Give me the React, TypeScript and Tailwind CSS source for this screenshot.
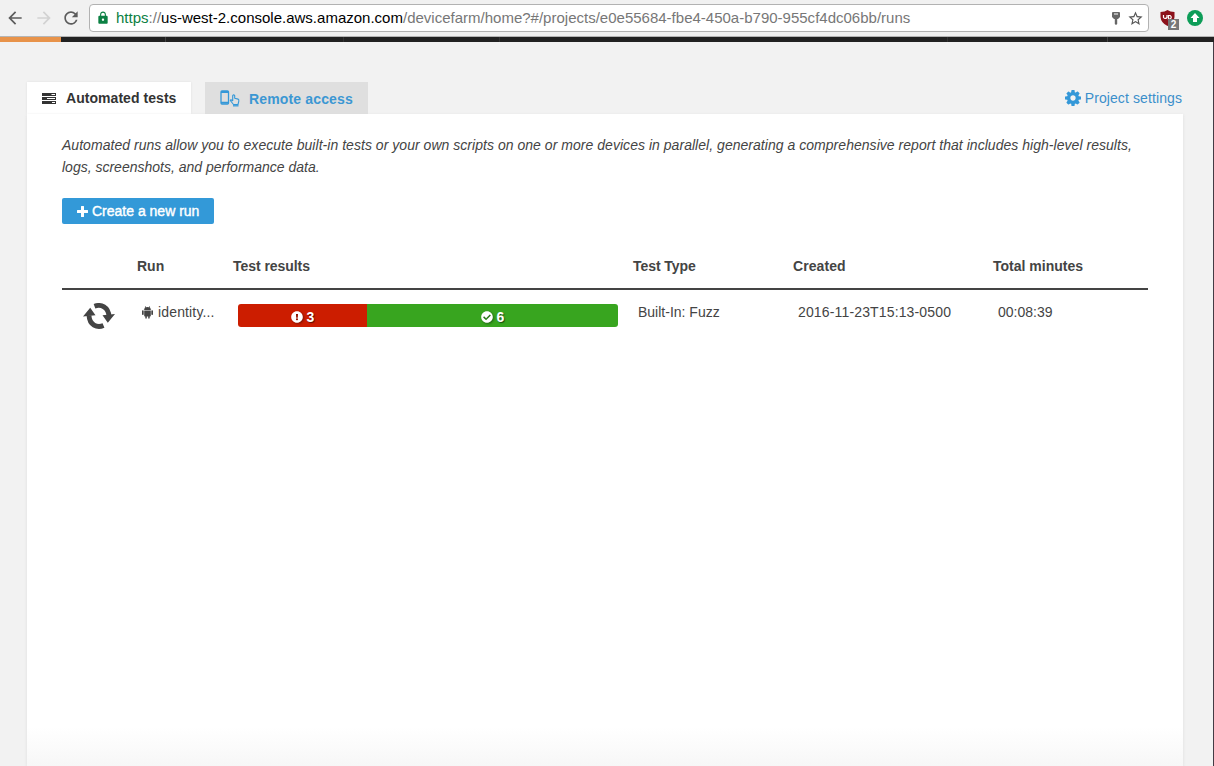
import React from "react";
import { FaExclamationCircle, FaCheckCircle } from "react-icons/fa";
import { MdArrowBack, MdArrowForward, MdRefresh, MdLock, MdStarBorder } from "react-icons/md";

function Cog() {
  return (
    <svg viewBox="0 0 1536 1536" className="size-[16px] shrink-0" fill="#3498d8">
      <path d="M1024 768q0-106-75-181t-181-75-181 75-75 181 75 181 181 75 181-75 75-181zm512-109v222q0 12-8 23t-20 13l-185 28q-19 54-39 91 35 50 107 138 10 12 10 25t-9 23q-27 37-99 108t-94 71q-12 0-26-9l-138-108q-44 23-91 38-16 136-29 186-7 28-36 28h-222q-14 0-24.500-8.500t-11.500-21.500l-28-184q-49-16-90-37l-141 107q-10 9-25 9-14 0-25-11-126-114-165-168-7-10-7-23 0-12 8-23 15-21 51-66.500t54-70.500q-27-50-41-99l-183-27q-13-2-21-12.500t-8-23.500v-222q0-12 8-23t19-13l186-28q14-46 39-92-40-57-107-138-10-12-10-24 0-10 9-23 26-36 98.500-107.500t94.500-71.500q13 0 26 10l138 107q44-23 91-38 16-136 29-186 7-28 36-28h222q14 0 24.500 8.500t11.500 21.500l28 184q49 16 90 37l142-107q9-9 24-9 13 0 25 10 129 119 165 170 7 8 7 22 0 12-8 23-15 21-51 66.500t-54 70.500q26 50 41 98l183 28q13 2 21 12.500t8 23.500z" />
    </svg>
  );
}

function Tasks() {
  return (
    <svg viewBox="0 0 14 11" className="h-[11px] w-[14px] shrink-0" fill="#333">
      <path fillRule="evenodd" d="M0 0h14v3H0zM9.500 1v1h3.500v-1zM0 4h14v3H0zM5 5v1h8v-1zM0 8h14v3H0zM10 9v1h3v-1z" />
    </svg>
  );
}

function Remote() {
  return (
    <svg viewBox="0 0 20 17" className="h-[17px] w-[20px] shrink-0" fill="none" stroke="#3498d8">
      <rect x="1" y="1" width="7.500" height="13" rx="1" strokeWidth="1.300" />
      <path d="M1 2h7.500M1 12.700h7.500" strokeWidth="1.800" />
      <path d="M12.700 11V5.500q1-1.300 2 0V8.300l3.400.8q1 .4.700 2l-.8 3.400h-4.500l-3.200-4q.4-1.500 2.400.5" strokeWidth="1.100" strokeLinejoin="round" />
      <path d="M13 15.800h5.500" strokeWidth="1.300" />
    </svg>
  );
}

function Plus() {
  return (
    <svg viewBox="0 0 11 11" className="size-[11px] shrink-0" fill="#fff">
      <path d="M4 .5Q4 0 4.500 0h2Q7 0 7 .5V4h3.500q.5 0 .5.500v2q0 .5-.5.500H7v3.500q0 .5-.5.500h-2Q4 11 4 10.500V7H.5Q0 7 0 6.500v-2Q0 4 .5 4H4z" />
    </svg>
  );
}

function Android() {
  return (
    <svg viewBox="0 0 11 13" className="h-[13px] w-[11px] shrink-0" fill="#444">
      <path d="M2.200 4Q2.400 2 4 1.300L3.300.2M8.800 4Q8.600 2 7 1.300L7.700.2" stroke="#444" strokeWidth=".4" />
      <path d="M2.200 4Q2.600 1 5.500 1T8.800 4zM2.200 4.400h6.600v5.400q0 .7-.7.700H7.700v1.800q-.8.900-1.500 0v-1.800H4.800v1.800q-.8.900-1.500 0v-1.800H2.900q-.7 0-.7-.7z" />
      <rect x="0" y="4.300" width="1.700" height="4.800" rx=".8" />
      <rect x="9.300" y="4.300" width="1.700" height="4.800" rx=".8" />
    </svg>
  );
}

function Cycle() {
  return (
    <svg viewBox="0 0 32 26" className="h-[26px] w-[32px] shrink-0" fill="none" stroke="#444">
      <path d="M11.500 3.200C18 .8 25.500 4 26 13.500M20.500 22.500C14 25.200 6.500 22 6 12.500" strokeWidth="4.800" />
      <path d="M19.500 13l12.500-1.300L24.800 20.500zM12.500 13L0 14.300 7.200 5.500z" transform="translate(0 -.8)" fill="#444" stroke="none" />
    </svg>
  );
}

function Shield() {
  return (
    <svg viewBox="0 0 20 20" className="h-[20px] w-[20px] shrink-0">
      <path d="M7.500 0Q10 2 14.500 2V7Q14 13 7.500 16Q1 13 .5 7V2Q5 2 7.500 0z" fill="#8c121b" />
      <path d="M3.500 5v2.500q1.500 2 3.500 0V5M8.500 10V5.500h1.500q2.500 1.500 0 3.500H8.500" fill="none" stroke="#fff" strokeWidth="1.200" />
    </svg>
  );
}

function Key() {
  return (
    <svg viewBox="0 0 10 13" className="h-[13px] w-[10px]">
      <path fillRule="evenodd" d="M1 1q0-1 1-1h6q1 0 1 1v4L7 7H6.200v5l-1.200 1-1.200-1V7H3L1 5zM3 1.500v1h4v-1z" fill="#666" />
    </svg>
  );
}

function BrowserBar() {
  return (
    <div className="flex h-[37px] shrink-0 items-start border-b border-[#b5b5b5] bg-[#f1f1f1]">
      <div className="mt-[8px] flex w-[89px] shrink-0 items-center pl-[5px]">
        <MdArrowBack className="size-[20px] text-[#5c5c5c]" />
        <MdArrowForward className="ml-[9px] size-[20px] text-[#d2d2d2]" />
        <MdRefresh className="ml-[7px] size-[20px] text-[#5c5c5c]" />
      </div>
      <div className="mt-[4px] flex h-[28px] w-[1060px] items-center rounded-[4px] border border-[#b2b2b2] bg-white pl-[6px] pr-[4px]">
        <MdLock className="size-[14px] text-[#0b8043]" />
        <div className="ml-[6px] text-[15px] leading-[20px] tracking-[0.004px] whitespace-nowrap text-[#777]">
          <span className="text-[#0b8043]">https</span>://<span className="text-black">us-west-2.console.aws.amazon.com</span>/devicefarm/home?#/projects/e0e55684-fbe4-450a-b790-955cf4dc06bb/runs
        </div>
        <div className="ml-auto flex items-center gap-[6px]">
          <Key />
          <MdStarBorder className="size-[17px] text-[#555]" />
        </div>
      </div>
      <div className="relative mt-[10px] ml-[11px] flex">
        <Shield />
        <div className="absolute top-[9px] left-[8px] h-[11px] w-[11px] bg-[#777] text-center text-[10px] leading-[11px] font-bold text-white">2</div>
      </div>
      <svg viewBox="0 0 16 16" className="mt-[10px] ml-[7px] size-[16px]">
        <circle cx="8" cy="8" r="8" fill="#0d9d58" />
        <path d="M8 3l4.500 5H10v4H6V8H3.500z" fill="#fff" />
      </svg>
    </div>
  );
}

export default function App() {
  return (
    <div className="flex h-[766px] w-[1214px] flex-col overflow-hidden bg-[#f2f2f2] font-['Liberation_Sans',Arial,sans-serif] text-[14px] leading-[20px] text-[#444]">
      <BrowserBar />
      <div className="flex h-[5px] shrink-0 bg-[#222]">
        <div className="w-[61px] bg-[#e8934a]" />
        <div className="w-[105px] border-r border-[#444]" />
        <div className="w-[178px] border-r border-[#333]" />
        <div className="w-[156px] border-r border-[#333]" />
        <div className="w-[448px] border-r border-[#333]" />
        <div className="w-[160px] border-r border-[#444]" />
      </div>
      <div className="flex grow border-r border-[#433b44] pr-[30px] pl-[27px]">
        <div className="flex w-[1156px] flex-col pt-[40px]">
          <div className="flex h-[32px] shrink-0">
            <div className="flex w-[164px] items-center bg-white pl-[15px] font-bold text-[#333] shadow-[0_0_2px_#ddd]">
              <Tasks />
              <span className="ml-[10px] tracking-[0.050px] whitespace-nowrap">Automated tests</span>
            </div>
            <div className="ml-[14px] flex w-[163px] items-center bg-[#dfdfdf] pl-[15px] font-bold text-[#3b97d3]">
              <Remote />
              <span className="ml-[9px] pt-[2px] tracking-[0.150px] whitespace-nowrap">Remote access</span>
            </div>
            <div className="mr-px ml-auto flex items-center gap-[4px] text-[#3b8fcb]">
              <Cog />
              <span className="tracking-[0.100px] whitespace-nowrap">Project settings</span>
            </div>
          </div>
          <main className="grow bg-white bg-linear-to-b from-white from-94% to-[#f7f7f7] px-[35px] pt-[20px] shadow-[0_1px_3px_#ddd]">
            <div className="leading-[22px] whitespace-nowrap italic">
              <p className="tracking-[0.035px]">Automated runs allow you to execute built-in tests or your own scripts on one or more devices in parallel, generating a comprehensive report that includes high-level results,</p>
              <p>logs, screenshots, and performance data.</p>
            </div>
            <button className="mt-[20px] flex h-[26px] w-[152px] items-center rounded-[2px] bg-[#3399d8] pl-[15px] text-white [-webkit-text-stroke:0.400px_white]">
              <Plus />
              <span className="ml-[4px] whitespace-nowrap">Create a new run</span>
            </button>
            <div className="mt-[32px] grid h-[34px] grid-cols-[75px_96px_400px_160px_200px_155px] border-b-2 border-[#444] font-bold whitespace-nowrap">
              <span />
              <span>Run</span>
              <span className="tracking-[-0.050px]">Test results</span>
              <span className="tracking-[-0.060px]">Test Type</span>
              <span className="tracking-[0.080px]">Created</span>
              <span>Total minutes</span>
            </div>
            <div className="grid grid-cols-[75px_96px_400px_160px_200px_155px] pt-[12px] whitespace-nowrap">
              <div className="pt-px pl-[21px]"><Cycle /></div>
              <div className="flex h-[20px] items-center pl-[5px]">
                <Android />
                <span className="ml-[5px] tracking-[0.150px]">identity...</span>
              </div>
              <div className="mt-[2px] ml-[5px] flex h-[23px] w-[380px] overflow-hidden rounded-[3px] font-bold text-white [text-shadow:1px_1px_1px_#0008]">
                <div className="flex w-[129px] items-center justify-center gap-[4px] bg-[#cc1d00] pt-[3px]">
                  <FaExclamationCircle className="size-[12px] drop-shadow-[1px_1px_1px_#0006]" /><span>3</span>
                </div>
                <div className="flex grow items-center justify-center gap-[4px] bg-[#38a51f] pt-[3px]">
                  <FaCheckCircle className="size-[12px] drop-shadow-[1px_1px_1px_#0006]" /><span>6</span>
                </div>
              </div>
              <span className="pl-[5px]">Built-In: Fuzz</span>
              <span className="pl-[5px] tracking-[0.150px]">2016-11-23T15:13-0500</span>
              <span className="pl-[5px]">00:08:39</span>
            </div>
          </main>
        </div>
      </div>
    </div>
  );
}
